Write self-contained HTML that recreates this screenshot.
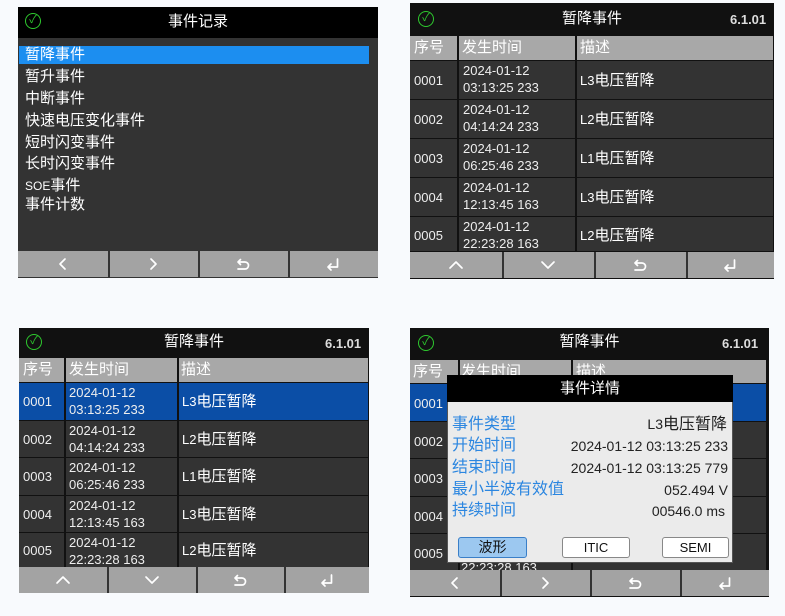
<!DOCTYPE html>
<html><head><meta charset="utf-8"><style>
*{margin:0;padding:0;box-sizing:border-box}
body{width:785px;height:616px;background:#f8fafd;position:relative;overflow:hidden;font-family:"Liberation Sans","Noto Sans CJK SC",sans-serif;color:#fff}
.a{position:absolute}
.hd{background:#000}
.ttl{font-size:15px;text-align:center;line-height:1}
.ok{width:16px;height:16px;border:1.5px solid #2ec82e;border-radius:50%;color:#2ec82e;font-size:11px;line-height:13px;text-align:center}
.ver{font-size:13px;font-weight:bold;color:#ddd}
.ft{background:#a3a3a3}
.dv{background:#333;width:1.5px}
.ic{display:flex;justify-content:center;align-items:center;height:26px}
.ic svg{width:16px;height:16px;fill:none;stroke:#fff;stroke-width:1.7;stroke-linecap:round;stroke-linejoin:round}
.cell{color:#eee;font-size:13px;line-height:17px}
.t{font-size:15px;line-height:1}
.v{color:#222;font-size:14px}
</style></head><body>
<svg width="0" height="0" style="position:absolute">
<defs>
<symbol id="lt" viewBox="0 0 16 16"><polyline points="10,3 5,8 10,13"/></symbol>
<symbol id="gt" viewBox="0 0 16 16"><polyline points="6,3 11,8 6,13"/></symbol>
<symbol id="up" viewBox="0 0 16 16"><polyline points="2,11 8,5 14,11"/></symbol>
<symbol id="dn" viewBox="0 0 16 16"><polyline points="2,5 8,11 14,5"/></symbol>
<symbol id="bk" viewBox="0 0 16 16"><path d="M3 6 H10 A3.5 3.5 0 0 1 10 13 H3 M5.5 3.5 L3 6 L5.5 8.5"/></symbol>
<symbol id="en" viewBox="0 0 16 16"><path d="M12.5 3 V11 H3 M6 8 L3 11 L6 14"/></symbol>
</defs></svg>

<!-- Panel 1 -->
<div class="a" style="left:18px;top:7px;width:360px;height:271px;background:#333"></div>
<div class="a hd" style="left:18px;top:7px;width:360px;height:31px"></div>
<div class="a ok" style="left:25px;top:13px">✓</div>
<div class="a ttl" style="left:18px;top:14px;width:360px">事件记录</div>
<div class="a" style="left:19px;top:46px;width:350px;height:18px;background:#1c8ef0"></div>
<div class="a t" style="left:25px;top:47px">暂降事件</div>
<div class="a t" style="left:25px;top:69px">暂升事件</div>
<div class="a t" style="left:25px;top:91px">中断事件</div>
<div class="a t" style="left:25px;top:113px">快速电压变化事件</div>
<div class="a t" style="left:25px;top:135px">短时闪变事件</div>
<div class="a t" style="left:25px;top:156px">长时闪变事件</div>
<div class="a t" style="left:25px;top:178px"><span style="font-size:12px">SOE</span>事件</div>
<div class="a t" style="left:25px;top:197px">事件计数</div>
<div class="a ft" style="left:18px;top:251px;width:360px;height:26px"></div>
<div class="a dv" style="left:108px;top:251px;height:26px"></div>
<div class="a dv" style="left:198px;top:251px;height:26px"></div>
<div class="a dv" style="left:288px;top:251px;height:26px"></div>
<div class="a ic" style="left:18px;top:251px;width:90px"><svg><use href="#lt"/></svg></div>
<div class="a ic" style="left:108px;top:251px;width:90px"><svg><use href="#gt"/></svg></div>
<div class="a ic" style="left:198px;top:251px;width:90px"><svg><use href="#bk"/></svg></div>
<div class="a ic" style="left:288px;top:251px;width:90px"><svg><use href="#en"/></svg></div>

<!-- Panel 2 -->
<div class="a" style="left:410px;top:3px;width:364px;height:276px;background:#111"></div>
<div class="a ok" style="left:418px;top:11px">✓</div>
<div class="a ttl" style="left:410px;top:11px;width:364px">暂降事件</div>
<div class="a ver" style="left:730px;top:12px">6.1.01</div>
<div class="a" style="left:410px;top:36px;width:363px;height:24px;background:#a8a8a8"></div>
<div class="a t" style="left:414px;top:40px">序号</div>
<div class="a t" style="left:462px;top:40px">发生时间</div>
<div class="a t" style="left:580px;top:40px">描述</div>
<div class="a" style="left:410px;top:61px;width:363px;height:38px;background:#333"></div>
<div class="a" style="left:410px;top:100px;width:363px;height:38px;background:#333"></div>
<div class="a" style="left:410px;top:139px;width:363px;height:38px;background:#333"></div>
<div class="a" style="left:410px;top:178px;width:363px;height:38px;background:#333"></div>
<div class="a" style="left:410px;top:217px;width:363px;height:34px;background:#333"></div>
<div class="a dv" style="left:457px;top:36px;height:216px;background:#111"></div>
<div class="a dv" style="left:575px;top:36px;height:216px;background:#111"></div>
<div class="a cell" style="left:414px;top:72px">0001</div><div class="a cell" style="left:463px;top:62px">2024-01-12<br>03:13:25 233</div><div class="a t" style="left:580px;top:73px"><span style="font-size:13px">L3</span>电压暂降</div>
<div class="a cell" style="left:414px;top:111px">0002</div><div class="a cell" style="left:463px;top:101px">2024-01-12<br>04:14:24 233</div><div class="a t" style="left:580px;top:112px"><span style="font-size:13px">L2</span>电压暂降</div>
<div class="a cell" style="left:414px;top:150px">0003</div><div class="a cell" style="left:463px;top:140px">2024-01-12<br>06:25:46 233</div><div class="a t" style="left:580px;top:151px"><span style="font-size:13px">L1</span>电压暂降</div>
<div class="a cell" style="left:414px;top:189px">0004</div><div class="a cell" style="left:463px;top:179px">2024-01-12<br>12:13:45 163</div><div class="a t" style="left:580px;top:190px"><span style="font-size:13px">L3</span>电压暂降</div>
<div class="a cell" style="left:414px;top:227px">0005</div><div class="a cell" style="left:463px;top:218px;height:33px;overflow:hidden">2024-01-12<br>22:23:28 163</div><div class="a t" style="left:580px;top:228px"><span style="font-size:13px">L2</span>电压暂降</div>
<div class="a ft" style="left:410px;top:252px;width:364px;height:26px"></div>
<div class="a dv" style="left:502px;top:252px;height:26px"></div>
<div class="a dv" style="left:594px;top:252px;height:26px"></div>
<div class="a dv" style="left:686px;top:252px;height:26px"></div>
<div class="a ic" style="left:410px;top:252px;width:92px"><svg><use href="#up"/></svg></div>
<div class="a ic" style="left:502px;top:252px;width:92px"><svg><use href="#dn"/></svg></div>
<div class="a ic" style="left:594px;top:252px;width:92px"><svg><use href="#bk"/></svg></div>
<div class="a ic" style="left:686px;top:252px;width:88px"><svg><use href="#en"/></svg></div>

<!-- Panel 3 -->
<div class="a" style="left:19px;top:328px;width:350px;height:265px;background:#111"></div>
<div class="a ok" style="left:26px;top:334px">✓</div>
<div class="a ttl" style="left:19px;top:334px;width:350px">暂降事件</div>
<div class="a ver" style="left:325px;top:336px">6.1.01</div>
<div class="a" style="left:19px;top:358px;width:349px;height:24px;background:#a8a8a8"></div>
<div class="a t" style="left:23px;top:362px">序号</div>
<div class="a t" style="left:69px;top:362px">发生时间</div>
<div class="a t" style="left:181px;top:362px">描述</div>
<div class="a" style="left:19px;top:383px;width:349px;height:37px;background:#0b4ea6"></div>
<div class="a" style="left:19px;top:421px;width:349px;height:36px;background:#333"></div>
<div class="a" style="left:19px;top:458px;width:349px;height:37px;background:#333"></div>
<div class="a" style="left:19px;top:496px;width:349px;height:36px;background:#333"></div>
<div class="a" style="left:19px;top:533px;width:349px;height:34px;background:#333"></div>
<div class="a dv" style="left:64px;top:358px;height:209px;background:#111"></div>
<div class="a dv" style="left:177px;top:358px;height:209px;background:#111"></div>
<div class="a cell" style="left:23px;top:393px">0001</div><div class="a cell" style="left:69px;top:384px">2024-01-12<br>03:13:25 233</div><div class="a t" style="left:182px;top:394px"><span style="font-size:13px">L3</span>电压暂降</div>
<div class="a cell" style="left:23px;top:431px">0002</div><div class="a cell" style="left:69px;top:422px">2024-01-12<br>04:14:24 233</div><div class="a t" style="left:182px;top:432px"><span style="font-size:13px">L2</span>电压暂降</div>
<div class="a cell" style="left:23px;top:468px">0003</div><div class="a cell" style="left:69px;top:459px">2024-01-12<br>06:25:46 233</div><div class="a t" style="left:182px;top:469px"><span style="font-size:13px">L1</span>电压暂降</div>
<div class="a cell" style="left:23px;top:506px">0004</div><div class="a cell" style="left:69px;top:497px">2024-01-12<br>12:13:45 163</div><div class="a t" style="left:182px;top:507px"><span style="font-size:13px">L3</span>电压暂降</div>
<div class="a cell" style="left:23px;top:542px">0005</div><div class="a cell" style="left:69px;top:534px;height:33px;overflow:hidden">2024-01-12<br>22:23:28 163</div><div class="a t" style="left:182px;top:543px"><span style="font-size:13px">L2</span>电压暂降</div>
<div class="a ft" style="left:19px;top:567px;width:350px;height:26px"></div>
<div class="a dv" style="left:107px;top:567px;height:26px"></div>
<div class="a dv" style="left:196px;top:567px;height:26px"></div>
<div class="a dv" style="left:284px;top:567px;height:26px"></div>
<div class="a ic" style="left:19px;top:567px;width:88px"><svg><use href="#up"/></svg></div>
<div class="a ic" style="left:107px;top:567px;width:89px"><svg><use href="#dn"/></svg></div>
<div class="a ic" style="left:196px;top:567px;width:88px"><svg><use href="#bk"/></svg></div>
<div class="a ic" style="left:284px;top:567px;width:85px"><svg><use href="#en"/></svg></div>

<!-- Panel 4 -->
<div class="a" style="left:410px;top:328px;width:359px;height:269px;background:#111"></div>
<div class="a ok" style="left:418px;top:335px">✓</div>
<div class="a ttl" style="left:410px;top:334px;width:359px">暂降事件</div>
<div class="a ver" style="left:722px;top:336px">6.1.01</div>
<div class="a" style="left:410px;top:360px;width:356px;height:23px;background:#a8a8a8"></div>
<div class="a t" style="left:413px;top:364px">序号</div>
<div class="a t" style="left:461px;top:364px">发生时间</div>
<div class="a t" style="left:576px;top:364px">描述</div>
<div class="a" style="left:410px;top:384px;width:356px;height:37px;background:#0b4ea6"></div>
<div class="a" style="left:410px;top:422px;width:356px;height:36px;background:#333"></div>
<div class="a" style="left:410px;top:459px;width:356px;height:37px;background:#333"></div>
<div class="a" style="left:410px;top:497px;width:356px;height:36px;background:#333"></div>
<div class="a" style="left:410px;top:534px;width:356px;height:36px;background:#333"></div>
<div class="a dv" style="left:458px;top:360px;height:210px;background:#111"></div>
<div class="a dv" style="left:571px;top:360px;height:210px;background:#111"></div>
<div class="a cell" style="left:414px;top:395px">0001</div>
<div class="a cell" style="left:414px;top:433px">0002</div>
<div class="a cell" style="left:414px;top:470px">0003</div>
<div class="a cell" style="left:414px;top:508px">0004</div>
<div class="a cell" style="left:414px;top:545px">0005</div>
<div class="a cell" style="left:461px;top:559px">22:23:28 163</div>
<div class="a ft" style="left:410px;top:570px;width:359px;height:26px"></div>
<div class="a dv" style="left:500px;top:570px;height:26px"></div>
<div class="a dv" style="left:590px;top:570px;height:26px"></div>
<div class="a dv" style="left:680px;top:570px;height:26px"></div>
<div class="a ic" style="left:410px;top:570px;width:90px"><svg><use href="#lt"/></svg></div>
<div class="a ic" style="left:500px;top:570px;width:90px"><svg><use href="#gt"/></svg></div>
<div class="a ic" style="left:590px;top:570px;width:90px"><svg><use href="#bk"/></svg></div>
<div class="a ic" style="left:680px;top:570px;width:89px"><svg><use href="#en"/></svg></div>
<!-- dialog -->
<div class="a" style="left:447px;top:375px;width:286px;height:188px;background:#ebebeb;border:1px solid #555"></div>
<div class="a hd" style="left:447px;top:375px;width:286px;height:27px"></div>
<div class="a ttl" style="left:447px;top:381px;width:286px">事件详情</div>
<div class="a t" style="left:452px;top:417px;color:#2b86e0;font-size:16px">事件类型</div>
<div class="a t" style="left:452px;top:438px;color:#2b86e0;font-size:16px">开始时间</div>
<div class="a t" style="left:452px;top:460px;color:#2b86e0;font-size:16px">结束时间</div>
<div class="a t" style="left:452px;top:482px;color:#2b86e0;font-size:16px">最小半波有效值</div>
<div class="a t" style="left:452px;top:503px;color:#2b86e0;font-size:16px">持续时间</div>
<div class="a t" style="right:58px;top:417px;color:#222;font-size:16px"><span style="font-size:14px">L3</span>电压暂降</div>
<div class="a v" style="right:57px;top:438px">2024-01-12 03:13:25 233</div>
<div class="a v" style="right:57px;top:460px">2024-01-12 03:13:25 779</div>
<div class="a v" style="right:57px;top:482px">052.494 V</div>
<div class="a v" style="right:60px;top:503px">00546.0 ms</div>
<div class="a" style="left:458px;top:537px;width:69px;height:21px;background:#9cc8f0;border:1px solid #3a7fc8;border-radius:3px;color:#111;font-size:14px;text-align:center;line-height:19px">波形</div>
<div class="a" style="left:562px;top:537px;width:68px;height:21px;background:#fff;border:1px solid #888;border-radius:3px;color:#111;font-size:13px;text-align:center;line-height:19px">ITIC</div>
<div class="a" style="left:662px;top:537px;width:67px;height:21px;background:#fff;border:1px solid #888;border-radius:3px;color:#111;font-size:13px;text-align:center;line-height:19px">SEMI</div>
</body></html>
